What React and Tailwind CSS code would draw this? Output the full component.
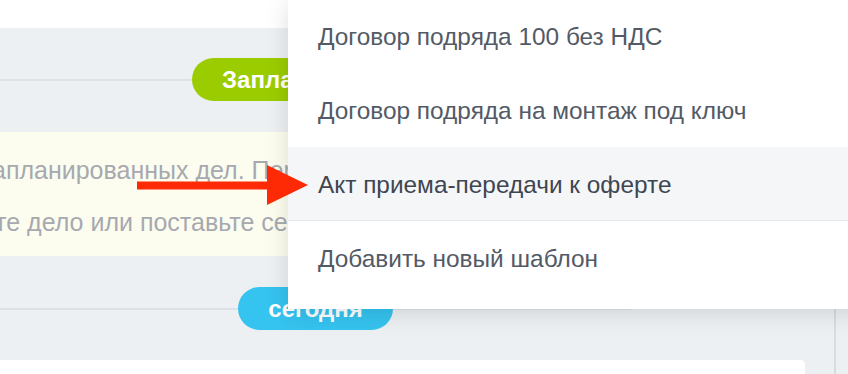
import React from 'react';

const items = [
  { label: 'Договор подряда 100 без НДС' },
  { label: 'Договор подряда на монтаж под ключ' },
  { label: 'Акт приема-передачи к оферте', active: true },
  { label: 'Добавить новый шаблон' },
];

const Pill = ({ color, children }) => (
  <div className="flex w-[631px] items-center">
    <div className="h-[2px] flex-1 bg-[#dde0e4]"></div>
    <div className={`flex h-[43px] items-center rounded-full px-[30px] text-[24px] font-bold text-white ${color}`}>
      {children}
    </div>
    <div className="h-[2px] flex-1 bg-[#dde0e4]"></div>
  </div>
);

const App = () => {
  return (
    <div className="relative flex h-[374px] w-[848px] overflow-hidden bg-[#edf0f3] font-['Liberation_Sans',Arial,sans-serif]">
      {/* Main column */}
      <div className="flex w-[805px] flex-col">
        <div className="h-[28px] bg-white"></div>

        <div className="mt-[30px]">
          <Pill color="bg-[#9bcc00]">Запланировано</Pill>
        </div>

        {/* Empty state note */}
        <div className="mt-[31px] h-[124px] overflow-hidden bg-[#fdfdef] pt-[12px] text-[25px] leading-[52px] text-[#a6a9b0]">
          <div className="-ml-[69px] whitespace-nowrap">Нет запланированных дел. Перейдите в раздел дел</div>
          <div className="-ml-[90px] whitespace-nowrap">Создайте дело или поставьте себе напоминание</div>
        </div>

        <div className="mt-[31px]">
          <Pill color="bg-[#35c3ef]">сегодня</Pill>
        </div>

        <div className="mt-[30px] flex-1 rounded-tr-[5px] bg-white"></div>
      </div>

      {/* Right strip */}
      <div className="flex flex-1 justify-end pr-[12px]">
        <div className="w-[2px] bg-[#d8dbdf]"></div>
      </div>

      {/* Template dropdown */}
      <div className="absolute left-[288px] top-[-1px] w-[600px] bg-white pb-[14px] shadow-[0_4px_22px_rgba(0,0,0,0.13)]">
        {items.map((item) => (
          <div
            key={item.label}
            className={`flex h-[74px] items-center pl-[30px] pt-[3px] text-[24.4px] ${
              item.active ? 'border-b border-[#e7eaed] bg-[#f5f6f8] text-[#3f4652]' : 'text-[#535a66]'
            }`}
          >
            {item.label}
          </div>
        ))}
      </div>

      {/* Red pointer arrow */}
      <svg className="absolute left-[137px] top-[165px]" width="172" height="41" viewBox="0 0 172 41">
        <rect x="0" y="16.5" width="132" height="8" fill="#fe2a06" />
        <polygon points="130,0 171,20 130,40" fill="#fe2a06" />
      </svg>
    </div>
  );
};

export default App;
